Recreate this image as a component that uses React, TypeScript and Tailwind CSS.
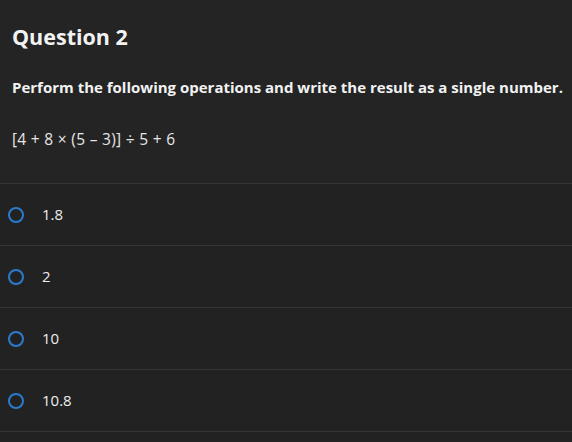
import React from 'react';

const options = ['1.8', '2', '10', '10.8'];

const App = () => {
  return (
    <div className="w-[572px] h-[442px] overflow-hidden bg-[#242424] text-white" style={{ fontFamily: '"Open Sans", Lato, sans-serif' }}>
      <div className="pl-3 pr-2 pt-[23px]">
        <h2 className="text-[21.5px] leading-[28px] font-bold text-[#f2f2f2]">Question 2</h2>
        <p className="mt-[26px] whitespace-nowrap text-[15px] leading-[20px] font-bold text-[#f2f2f2]">
          Perform the following operations and write the result as a single number.
        </p>
        <p className="mt-[32px] text-[15.5px] leading-[20px] text-[#e6e6e6] tracking-[0.3px]">[4 + 8 × (5 – 3)] ÷ 5 + 6</p>
      </div>
      <ul className="mt-[34px] bg-[#222222]">
        {options.map((opt) => (
          <li key={opt} className="flex items-center h-[62px] border-t border-[#363636] px-[8px]">
            <span className="w-[16px] h-[16px] rounded-full border-2 border-[#2b7bd0]" />
            <span className="ml-[18px] text-[15px] text-[#ededed]">{opt}</span>
          </li>
        ))}
        <li className="h-[10px] border-t border-[#363636]" />
      </ul>
    </div>
  );
};

export default App;
